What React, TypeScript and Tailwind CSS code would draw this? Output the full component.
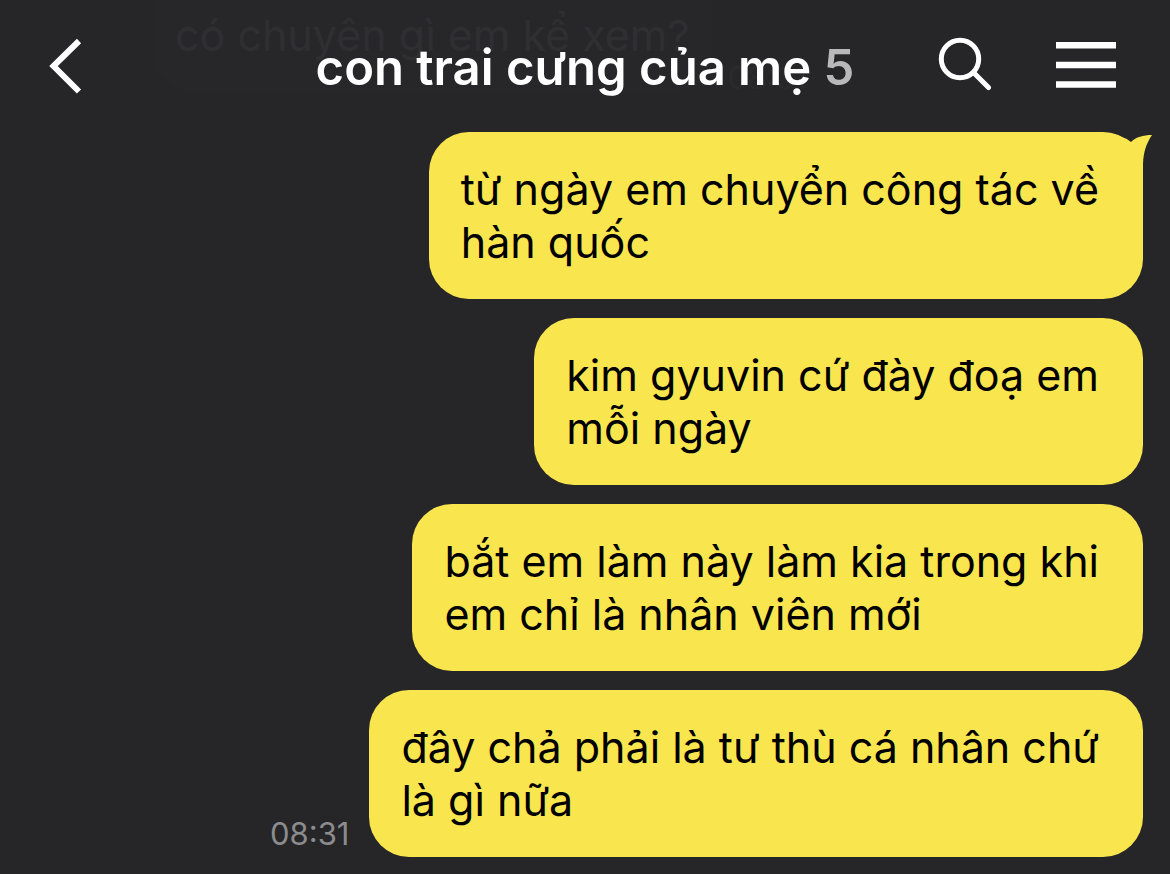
const messages = [
  { lines: ["từ ngày em chuyển công tác về", "hàn quốc"], tail: true },
  { lines: ["kim gyuvin cứ đày đoạ em", "mỗi ngày"] },
  { lines: ["bắt em làm này làm kia trong khi", "em chỉ là nhân viên mới"] },
  { lines: ["đây chả phải là tư thù cá nhân chứ", "là gì nữa"], time: "08:31" },
];

type BubbleProps = {
  lines: string[];
  tail?: boolean;
  time?: string;
};

const BackIcon = () => (
  <svg className="h-[60px] w-9" viewBox="0 0 36 60" fill="none" stroke="currentColor" strokeWidth="6" aria-hidden="true">
    <path d="M31 5L5.5 30L31 55.5" />
  </svg>
);

const SearchIcon = () => (
  <svg className="h-[60px] w-14" viewBox="0 0 56 60" fill="none" stroke="currentColor" strokeWidth="5" aria-hidden="true">
    <circle cx="24" cy="23" r="18.7" />
    <path d="M38 37L52.5 51.5" strokeLinecap="round" />
  </svg>
);

const MenuIcon = () => (
  <svg className="h-[60px] w-[60px]" viewBox="0 0 60 60" fill="currentColor" aria-hidden="true">
    <path d="M0 6h60v6.5H0zM0 25.7h60v6.5H0zM0 45.2h60v6.5H0z" />
  </svg>
);

const Bubble = ({ lines, tail, time }: BubbleProps) => (
  <li className="flex items-end justify-end gap-5">
    {time && <time className="pb-1 text-[31px] leading-[38px] text-[#8c8c8e]">{time}</time>}
    <div className="relative rounded-[40px] bg-[#f9e64f] pt-[31px] pr-11 pb-[30px] pl-8 text-[43px] leading-[53px] text-black">
      {tail && (
        <svg className="absolute top-0 -right-2.5 h-12 w-12" viewBox="0 0 48 48" aria-hidden="true">
          {/* dark notch between the rounded corner and the tail */}
          <path d="M4 0C13 1 20 4 26 10L48 2V0Z" fill="#262628" />
          <path d="M26 10C31 5 38 3 47 3C41 12 38.5 20 38 32V48L20 40L14 4Q21 6 26 10Z" fill="#f9e64f" />
        </svg>
      )}
      {lines.map((line) => (
        <p key={line}>{line}</p>
      ))}
    </div>
  </li>
);

const ChatRoom = () => {
  return (
    <div className="min-h-screen bg-[#262628] font-['Inter',sans-serif]">
      <header className="relative grid h-[132px] grid-cols-[1fr_auto_1fr] items-start px-12 pt-9">
        {/* previous message, almost hidden under the header */}
        <div className="absolute top-0 left-[153px] flex items-end gap-4" aria-hidden="true">
          <p className="rounded-b-[40px] bg-[#272729] px-[22px] pt-[9px] pb-[30px] text-[43px] leading-[53px] text-[#2f2f31]">
            có chuyên gì em kể xem?
          </p>
          <span className="text-[31px] leading-[28px] text-[#2a2a2c]">08:31</span>
        </div>
        <button type="button" aria-label="Back" className="relative justify-self-start text-white">
          <BackIcon />
        </button>
        <h1 className="relative text-[49px] leading-[64px] font-semibold text-white">
          con trai cưng của mẹ <span className="text-[#b8b8ba]">5</span>
        </h1>
        <div className="relative flex gap-16 justify-self-end pr-1.5 text-white">
          <button type="button" aria-label="Search">
            <SearchIcon />
          </button>
          <button type="button" aria-label="Menu">
            <MenuIcon />
          </button>
        </div>
      </header>
      <ul className="flex flex-col gap-[19px] pr-[27px]">
        {messages.map((m) => (
          <Bubble key={m.lines[0]} {...m} />
        ))}
      </ul>
    </div>
  );
};

export default ChatRoom;
